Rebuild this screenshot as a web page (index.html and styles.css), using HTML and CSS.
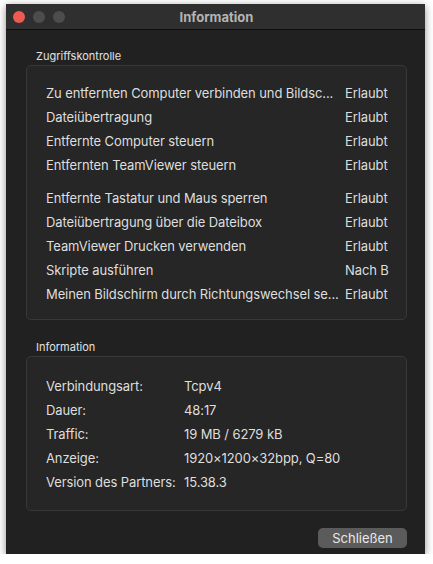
FILE: index.html
```html
<!DOCTYPE html>
<html>
<head>
<meta charset="utf-8">
<link rel="stylesheet" href="styles.css">
</head>
<body>
<div class="window">
  <div class="titlebar">
    <div class="lights">
      <span class="light red"></span>
      <span class="light gray"></span>
      <span class="light gray"></span>
    </div>
    <div class="title">Information</div>
  </div>
  <div class="content">
    <div class="group-label">Zugriffskontrolle</div>
    <div class="box access">
      <div class="block">
        <div class="row"><span class="name">Zu entfernten Computer verbinden und Bildsc...</span><span class="val">Erlaubt</span></div>
        <div class="row"><span class="name">Dateiübertragung</span><span class="val">Erlaubt</span></div>
        <div class="row"><span class="name">Entfernte Computer steuern</span><span class="val">Erlaubt</span></div>
        <div class="row"><span class="name">Entfernten TeamViewer steuern</span><span class="val">Erlaubt</span></div>
      </div>
      <div class="block">
        <div class="row"><span class="name">Entfernte Tastatur und Maus sperren</span><span class="val">Erlaubt</span></div>
        <div class="row"><span class="name">Dateiübertragung über die Dateibox</span><span class="val">Erlaubt</span></div>
        <div class="row"><span class="name">TeamViewer Drucken verwenden</span><span class="val">Erlaubt</span></div>
        <div class="row"><span class="name">Skripte ausführen</span><span class="val">Nach B</span></div>
        <div class="row"><span class="name">Meinen Bildschirm durch Richtungswechsel se...</span><span class="val">Erlaubt</span></div>
      </div>
    </div>
    <div class="group-label second">Information</div>
    <div class="box info">
      <div class="irow"><span class="ilabel">Verbindungsart:</span><span>Tcpv4</span></div>
      <div class="irow"><span class="ilabel">Dauer:</span><span>48:17</span></div>
      <div class="irow"><span class="ilabel">Traffic:</span><span>19 MB / 6279 kB</span></div>
      <div class="irow"><span class="ilabel">Anzeige:</span><span>1920×1200×32bpp, Q=80</span></div>
      <div class="irow"><span class="ilabel">Version des Partners:</span><span>15.38.3</span></div>
    </div>
    <div class="footer">
      <button class="btn">Schließen</button>
    </div>
  </div>
</div>
</body>
</html>
```
FILE: styles.css
```css
html, body {
  margin: 0;
  padding: 0;
  background: #ffffff;
}
body {
  padding: 4px 0 0 6px;
  font-family: "Inter", "Liberation Sans", sans-serif;
  font-size: 13px;
  color: #dedede;
}
.window {
  width: 419px;
  height: 550px;
  background: #212121;
  box-shadow: 0 2px 8px rgba(0,0,0,0.45);
  display: flex;
  flex-direction: column;
  box-sizing: border-box;
}
.titlebar {
  height: 25px;
  background: #2f2f2f;
  border-bottom: 1px solid #0e0e0e;
  display: flex;
  align-items: center;
  position: relative;
}
.lights {
  display: flex;
  gap: 8px;
  padding-left: 7px;
}
.light {
  width: 12px;
  height: 12px;
  border-radius: 50%;
}
.light.red { background: #ee5a52; }
.light.gray { background: #4d4d4d; }
.title {
  position: absolute;
  left: 0;
  right: 0;
  top: 0;
  bottom: 0;
  display: flex;
  align-items: center;
  justify-content: center;
  font-weight: 700;
  color: #b4b4b4;
  font-size: 13px;
  padding-left: 2px;
}
.content {
  padding: 19px 18px 0 20px;
  display: flex;
  flex-direction: column;
}
.group-label {
  font-size: 11px;
  line-height: 14px;
  padding-left: 10px;
  color: #e2e2e2;
  margin-bottom: 2px;
}
.group-label.second {
  margin-top: 20px;
}
.box {
  background: #262626;
  border: 1px solid #383838;
  border-radius: 5px;
}
.access {
  height: 255px;
  box-sizing: border-box;
  padding: 15px 17px 0 19px;
  display: flex;
  flex-direction: column;
  gap: 9px;
}
.row {
  display: flex;
  height: 24px;
  align-items: center;
  gap: 8px;
  letter-spacing: -0.1px;
}
.name {
  flex: 1;
  min-width: 0;
  white-space: nowrap;
}
.val {
  width: 44px;
  flex: none;
  white-space: nowrap;
}
.info {
  height: 155px;
  box-sizing: border-box;
  padding: 17px 19px 0 19px;
}
.irow {
  display: flex;
  height: 24px;
  align-items: center;
  letter-spacing: -0.1px;
}
.ilabel {
  width: 138px;
  flex: none;
}
.footer {
  display: flex;
  justify-content: flex-end;
  padding-top: 17px;
}
.btn {
  width: 89px;
  height: 20px;
  border: none;
  border-radius: 5px;
  background: #5b5b5b;
  color: #e8e8e8;
  font-family: "Inter", "Liberation Sans", sans-serif;
  font-size: 13px;
  padding: 0;
}
```
